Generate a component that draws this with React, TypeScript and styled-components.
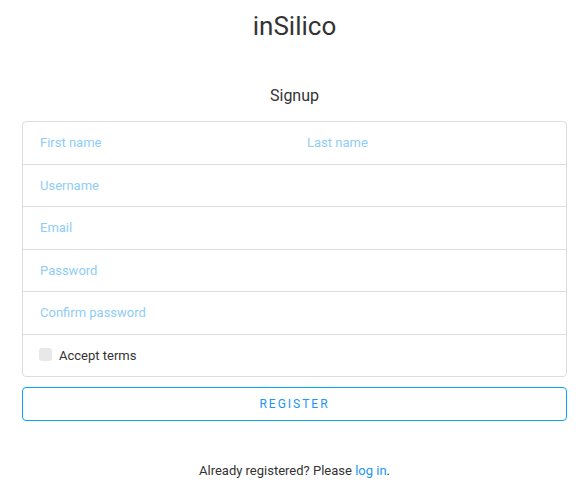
import React from 'react';
import styled, { createGlobalStyle } from 'styled-components';

const GlobalStyle = createGlobalStyle`
  html, body {
    margin: 0;
    padding: 0;
    background: #fff;
    font-family: Roboto, "Liberation Sans", sans-serif;
    color: #333;
  }
`;

const Page = styled.div`
  padding: 0 21px 0 22px;
`;

const Title = styled.h1`
  margin: 11px 0 0;
  font-size: 26px;
  line-height: 30px;
  font-weight: 400;
  text-align: center;
  color: #333;
`;

const Subtitle = styled.h2`
  margin: 45px 0 15px;
  font-size: 16px;
  line-height: 20px;
  font-weight: 400;
  text-align: center;
  color: #333;
`;

const Card = styled.div`
  border: 1px solid #ddd;
  border-radius: 4px;
  background: #fff;
`;

const Row = styled.div<{ $split?: boolean }>`
  height: 41.5px;
  display: grid;
  grid-template-columns: ${(p) => (p.$split ? '267px 1fr' : '1fr')};
  align-items: center;
  & + & {
    border-top: 1px solid #ddd;
  }
`;

const Field = styled.input`
  border: none;
  outline: none;
  background: transparent;
  font-family: inherit;
  font-size: 13px;
  color: #333;
  padding: 0 17px;
  height: 100%;
  min-width: 0;
  &::placeholder {
    color: #8fcdf6;
  }
`;

const CheckLabel = styled.label`
  display: flex;
  align-items: center;
  gap: 7px;
  padding: 0 16px;
  font-size: 13px;
  color: #333;
`;

const Box = styled.span`
  width: 13px;
  height: 13px;
  border-radius: 3px;
  background: #e8e8e8;
  margin-top: -2px;
`;

const Button = styled.button`
  display: block;
  width: 100%;
  height: 34px;
  margin-top: 10px;
  border: 1px solid #03a9f4;
  border-radius: 4px;
  background: #fff;
  color: #2196f3;
  font-family: inherit;
  font-size: 12px;
  letter-spacing: 2px;
  cursor: pointer;
`;

const Footer = styled.p`
  margin: 42px 0 0;
  font-size: 13px;
  line-height: 16px;
  text-align: center;
  color: #333;
`;

const Link = styled.a`
  color: #2196f3;
  text-decoration: none;
`;

const App = () => {
  return (
    <Page>
      <GlobalStyle />
      <Title>inSilico</Title>
      <Subtitle>Signup</Subtitle>
      <Card>
        <Row $split>
          <Field placeholder="First name" />
          <Field placeholder="Last name" />
        </Row>
        <Row>
          <Field placeholder="Username" />
        </Row>
        <Row>
          <Field placeholder="Email" />
        </Row>
        <Row>
          <Field type="password" placeholder="Password" />
        </Row>
        <Row>
          <Field type="password" placeholder="Confirm password" />
        </Row>
        <Row>
          <CheckLabel>
            <Box />
            Accept terms
          </CheckLabel>
        </Row>
      </Card>
      <Button>REGISTER</Button>
      <Footer>
        Already registered? Please <Link href="#">log in</Link>.
      </Footer>
    </Page>
  );
};

export default App;
